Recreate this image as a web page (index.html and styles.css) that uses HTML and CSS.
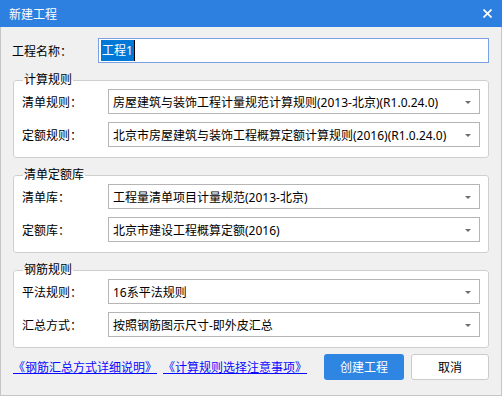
FILE: index.html
```html
<!DOCTYPE html>
<html lang="zh-CN">
<head>
  <meta charset="UTF-8">
  <title>新建工程</title>
  <link rel="stylesheet" href="styles.css">
</head>
<body>
  <div class="window">
    <div class="titlebar">
      <span class="title">新建工程</span>
      <svg class="close" width="9" height="9" viewBox="0 0 9 9">
        <path d="M0.5 0.5 L8.5 8.5 M8.5 0.5 L0.5 8.5" stroke="#fff" stroke-width="1.7" fill="none"/>
      </svg>
    </div>
    <div class="content">
      <div class="name-row">
        <span class="label">工程名称：</span>
        <div class="name-input"><span class="selected">工程1</span><span class="caret"></span></div>
      </div>

      <fieldset class="group">
        <legend>计算规则</legend>
        <div class="row">
          <span class="label">清单规则：</span>
          <div class="combo">房屋建筑与装饰工程计量规范计算规则(2013-北京)(R1.0.24.0)</div>
        </div>
        <div class="row">
          <span class="label">定额规则：</span>
          <div class="combo">北京市房屋建筑与装饰工程概算定额计算规则(2016)(R1.0.24.0)</div>
        </div>
      </fieldset>

      <fieldset class="group">
        <legend>清单定额库</legend>
        <div class="row">
          <span class="label">清单库：</span>
          <div class="combo">工程量清单项目计量规范(2013-北京)</div>
        </div>
        <div class="row">
          <span class="label">定额库：</span>
          <div class="combo">北京市建设工程概算定额(2016)</div>
        </div>
      </fieldset>

      <fieldset class="group">
        <legend>钢筋规则</legend>
        <div class="row">
          <span class="label">平法规则：</span>
          <div class="combo">16系平法规则</div>
        </div>
        <div class="row">
          <span class="label">汇总方式：</span>
          <div class="combo">按照钢筋图示尺寸-即外皮汇总</div>
        </div>
      </fieldset>

      <div class="footer">
        <div class="links">
          <a href="#">《钢筋汇总方式详细说明》</a>
          <a href="#">《计算规则选择注意事项》</a>
        </div>
        <div class="buttons">
          <button class="btn primary">创建工程</button>
          <button class="btn cancel">取消</button>
        </div>
      </div>
    </div>
  </div>
</body>
</html>
```

FILE: styles.css
```css
* {
  margin: 0;
  padding: 0;
  box-sizing: border-box;
}
body {
  font-family: "Noto Sans", "Noto Sans CJK SC", sans-serif;
  font-size: 12px;
  color: #000;
  background: #f0f0f0;
}
.window {
  width: 502px;
  height: 396px;
  border: 1px solid #c6c6c6;
  border-top: none;
  background: #f0f0f0;
}
.titlebar {
  height: 27px;
  margin: 0 -1px;
  background: #2d80e0;
  display: flex;
  align-items: center;
  justify-content: space-between;
  padding: 0 10px 0 9px;
}
.title {
  color: #fff;
  font-size: 12px;
}
.content {
  padding: 11px 12px 0 11px;
}
.label {
  width: 86px;
  flex-shrink: 0;
}
.name-row {
  display: flex;
  align-items: center;
}
.name-input {
  flex: 1;
  height: 25px;
  border: 1px solid #7aa0e4;
  background: #fff;
  display: flex;
  align-items: center;
  padding-left: 2px;
}
.selected {
  background: #0078d7;
  color: #fff;
  line-height: 21px;
  padding: 0 1px;
}
.caret {
  width: 1px;
  height: 21px;
  background: #000;
}
.group {
  margin: 9px 0 0 1px;
  border: 1px solid #cfcfcf;
  border-radius: 3px;
  background: #fff;
  padding: 1px 8px 10px 8px;
  display: flex;
  flex-direction: column;
  gap: 8px;
  min-inline-size: 0;
}
.group legend {
  margin-left: 1px;
  padding: 0 1px;
  line-height: 16px;
}
.row {
  display: flex;
  align-items: center;
}
.combo {
  flex: 1;
  height: 25px;
  border: 1px solid #b5b5b5;
  background: #fff;
  display: flex;
  align-items: center;
  padding-left: 4px;
  position: relative;
}
.combo::after {
  content: "";
  position: absolute;
  right: 8px;
  top: 11px;
  border-left: 3px solid transparent;
  border-right: 3px solid transparent;
  border-top: 3px solid #6d6d6d;
}
.footer {
  display: flex;
  justify-content: space-between;
  align-items: center;
  margin-top: 6px;
}
.links {
  display: flex;
  gap: 6px;
  margin-left: 1px;
}
.links a {
  color: #0a0aff;
}
.buttons {
  display: flex;
  gap: 7px;
}
.btn {
  height: 26px;
  border-radius: 3px;
  font-family: inherit;
  font-size: 12px;
  cursor: pointer;
}
.primary {
  width: 80px;
  background: #2e85e2;
  border: none;
  color: #fff;
}
.cancel {
  width: 78px;
  background: #fff;
  border: 1px solid #cbcbcb;
  color: #000;
}
```
